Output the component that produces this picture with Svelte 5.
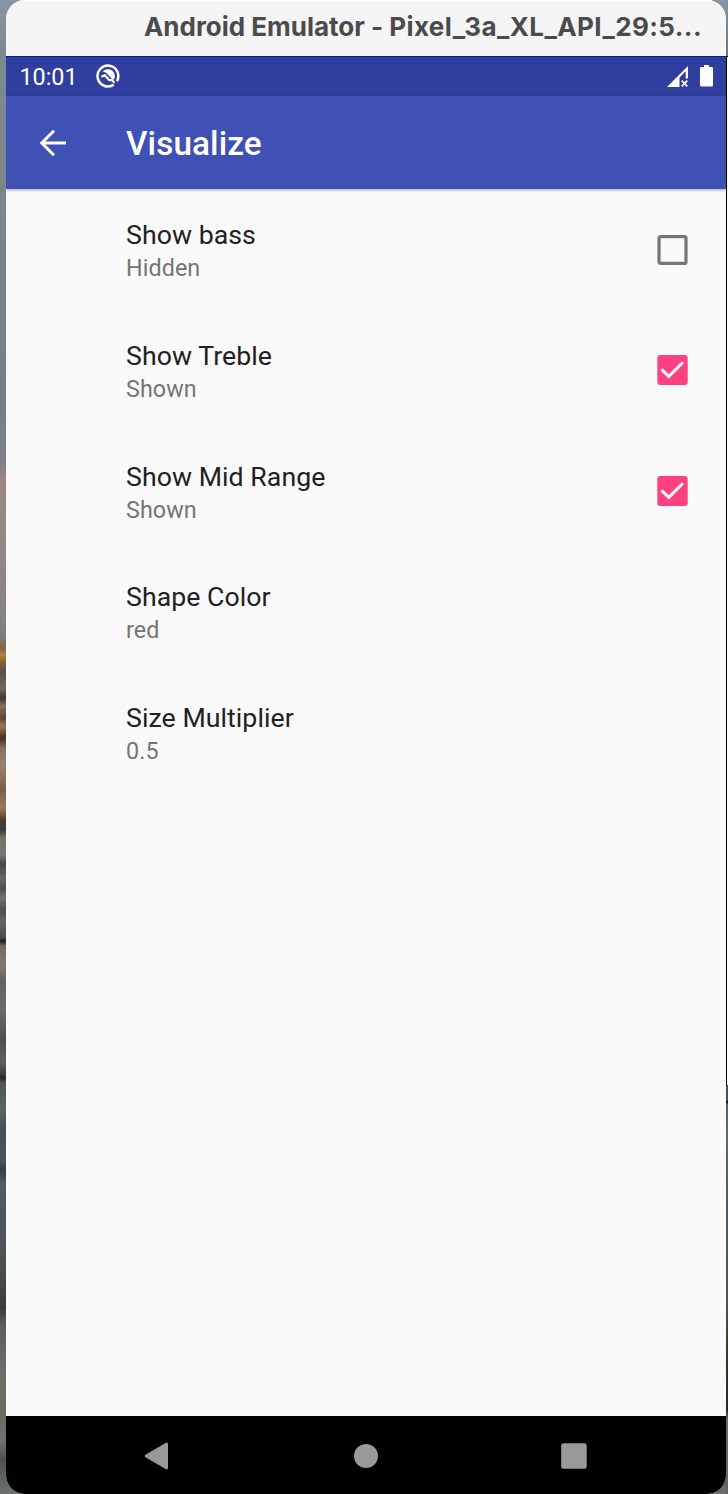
<script>
  const settings = [
    { title: 'Show bass', summary: 'Hidden', checked: false },
    { title: 'Show Treble', summary: 'Shown', checked: true },
    { title: 'Show Mid Range', summary: 'Shown', checked: true },
    { title: 'Shape Color', summary: 'red' },
    { title: 'Size Multiplier', summary: '0.5' }
  ];
</script>

<div class="desktop">
  <div class="right-edge"></div>
  <div class="window">
    <header class="titlebar">Android Emulator - <span class="device">Pixel_3a_XL_API_29:5...</span></header>
    <div class="status">
      <span class="time">10:01</span>
      <svg class="debug" width="24" height="24" viewBox="0 0 24 24">
        <path d="M21 17.1A10.4 10.4 0 1 0 17.8 20.6" fill="none" stroke="#fff" stroke-width="2.5" />
        <path d="M6.6 7.6A7 7 0 0 1 18 15.6L16.4 15.4L10.2 8.8Z" fill="#fff" />
        <path d="M5.4 12.8L8.8 11.2L13.4 16.2H16L18.6 18.8" fill="none" stroke="#fff" stroke-width="2.2" stroke-linejoin="round" />
      </svg>
      <svg class="signal" width="22" height="22" viewBox="0 0 22 22">
        <path fill="#fff" fill-rule="evenodd" d="M0 21L21 0V12.5H18.7V5.3L12.5 11.5V21Z" />
        <path d="M14.7 14.7L20.3 20.3M20.3 14.7L14.7 20.3" stroke="#fff" stroke-width="1.7" />
      </svg>
      <svg class="battery" width="13" height="22" viewBox="0 0 13 22">
        <path fill="#fff" d="M4 0H9V2H11.7Q13 2 13 3.3V20.2Q13 21.5 11.7 21.5H1.3Q0 21.5 0 20.2V3.3Q0 2 1.3 2H4Z" />
      </svg>
    </div>
    <div class="appbar">
      <svg class="back" width="28" height="28" viewBox="0 0 28 28">
        <path d="M27 14H2.5M15 1.8L2.8 14L15 26.2" fill="none" stroke="#fff" stroke-width="3" />
      </svg>
      <h1>Visualize</h1>
    </div>
    <main>
      {#each settings as item}
        <div class="row">
          <div class="text">
            <div class="title">{item.title}</div>
            <div class="summary">{item.summary}</div>
          </div>
          {#if item.checked !== undefined}
            <svg width="31" height="30" viewBox="0 0 31 30">
              {#if item.checked}
                <rect x=".3" width="30.4" height="30" rx="3" fill="#ff4081" />
                <path d="M4.5 14.3L11.8 21.3L26 7.3" fill="none" stroke="#fafafa" stroke-width="3" />
              {:else}
                <rect x="2" y="1.6" width="27" height="26.8" rx="1.5" fill="none" stroke="#757575" stroke-width="3.2" />
              {/if}
            </svg>
          {/if}
        </div>
      {/each}
    </main>
    <nav>
      <svg width="24" height="28" viewBox="0 0 24 28"><path d="M1 13L22 .8Q24 .2 24 2V26Q24 27.8 22 27.2L1 15Q0 14 1 13Z" fill="#999" /></svg>
      <svg width="26" height="24" viewBox="0 0 26 24"><circle cx="14" cy="12" r="12" fill="#999" /></svg>
      <svg width="26" height="26" viewBox="0 0 26 26"><rect width="25.5" height="25.5" x=".2" y=".2" rx="2.5" fill="#999" /></svg>
    </nav>
  </div>
</div>

<style>
  .desktop {
    position: relative;
    box-sizing: border-box;
    width: 728px;
    height: 1494px;
    padding: 0 2px 0 6px;
    overflow: hidden;
    font-family: Roboto, sans-serif;
    background: linear-gradient(#8596a5 0, #7b8991 50px, #7c878b 180px, #747f8a 400px, #808289 465px, #9d8984 480px, #918887 560px, #827e83 635px, #846743 648px, #ad803f 655px, #805c2c 664px, #535350 672px, #746858 688px, #393b3a 698px, #86705b 706px, #604533 718px, #9b7557 726px, #482f1f 738px, #817066 748px, #9d8068 765px, #78604d 790px, #a17857 808px, #4c3d35 820px, #353d40 830px, #79736d 838px, #7b756e 855px, #43484a 864px, #65676a 878px, #4b5353 888px, #747471 898px, #4c5149 910px, #646461 922px, #4e4e4c 937px, #22211e 941px, #756a62 946px, #88786c 965px, #66625f 980px, #6d6b68 1010px, #4c504d 1040px, #60605e 1062px, #42413f 1073px, #252723 1078px, #505857 1083px, #5a6362 1110px, #425155 1130px, #45565a 1160px, #304148 1170px, #505f64 1185px, #4c585f 1210px, #51565a 1240px, #44494b 1280px, #393c3b 1308px, #5c5c59 1325px, #6e6f6b 1370px, #6e6b61 1410px, #70736f 1440px, #4b5152 1460px, #6b706e 1494px);
  }
  .right-edge {
    position: absolute;
    left: 726px;
    top: 0;
    width: 2px;
    height: 1494px;
    background:
      linear-gradient(#000, #000) 0 56px / 2px 1px no-repeat,
      linear-gradient(#000, #000) 0 57px / 1px 1028px no-repeat,
      linear-gradient(#fff, #fff) 1px 57px / 1px 1028px no-repeat,
      linear-gradient(#8798a8 0, #69737c 56px, #000 1084px, #465357 1086px, #475256 1100px, #111719 1102px, #596569 1105px, #626866 1140px, #4d5a5d 1220px, #545451 1300px, #39372f 1350px, #262727 1410px, #6b6b69 1420px, #62625f 1494px);
  }
  .window {
    position: relative;
    display: flex;
    flex-direction: column;
    height: 1494px;
    overflow: hidden;
    border-radius: 19px;
    background: #fafafa;
  }
  .titlebar {
    box-sizing: border-box;
    height: 56px;
    padding-right: 24px;
    text-align: right;
    line-height: 52px;
    font-family: Inter, sans-serif;
    font-size: 26px;
    font-weight: 700;
    letter-spacing: -0.02px;
    white-space: nowrap;
    color: #4b4b4b;
    background: #f5f5f5;
    border-top: 1px solid #fff;
  }
  .device { letter-spacing: .4px; }
  .status {
    box-sizing: border-box;
    display: flex;
    align-items: center;
    height: 40px;
    padding: 0 13px 0 13.5px;
    color: #fff;
    background: #303f9f;
    border-top: 1px solid #0c1c80;
  }
  .time { font-size: 23.3px; line-height: 40px; width: 76.5px; }
  .debug { margin-top: -1px; }
  .signal { margin-left: auto; margin-right: 11px; }
  .battery { margin-top: -1px; }
  .appbar {
    position: relative;
    display: flex;
    align-items: center;
    height: 93px;
    padding-left: 33px;
    background: #3f51b5;
    box-shadow: 0 1px 3px rgba(0, 0, 0, .35);
  }
  h1 {
    margin: 2px 0 0 59px;
    color: #fff;
    font-size: 33.3px;
    line-height: 40px;
    font-weight: 500;
    letter-spacing: .1px;
  }
  main { flex: 1; padding-top: .2px; }
  .row {
    box-sizing: border-box;
    display: flex;
    align-items: center;
    justify-content: space-between;
    height: 120.67px;
    padding: 0 38px 0 120px;
  }
  .text { padding-top: 4.2px; }
  .title {
    color: #212121;
    font-size: 26.7px;
    line-height: 35px;
    letter-spacing: .05px;
    white-space: nowrap;
  }
  .summary {
    color: #757575;
    font-size: 23.3px;
    line-height: 31.4px;
    letter-spacing: .08px;
  }
  nav {
    box-sizing: border-box;
    display: flex;
    align-items: center;
    justify-content: space-between;
    height: 78px;
    padding: 2px 139px 0 138px;
    background: #000;
  }
</style>
